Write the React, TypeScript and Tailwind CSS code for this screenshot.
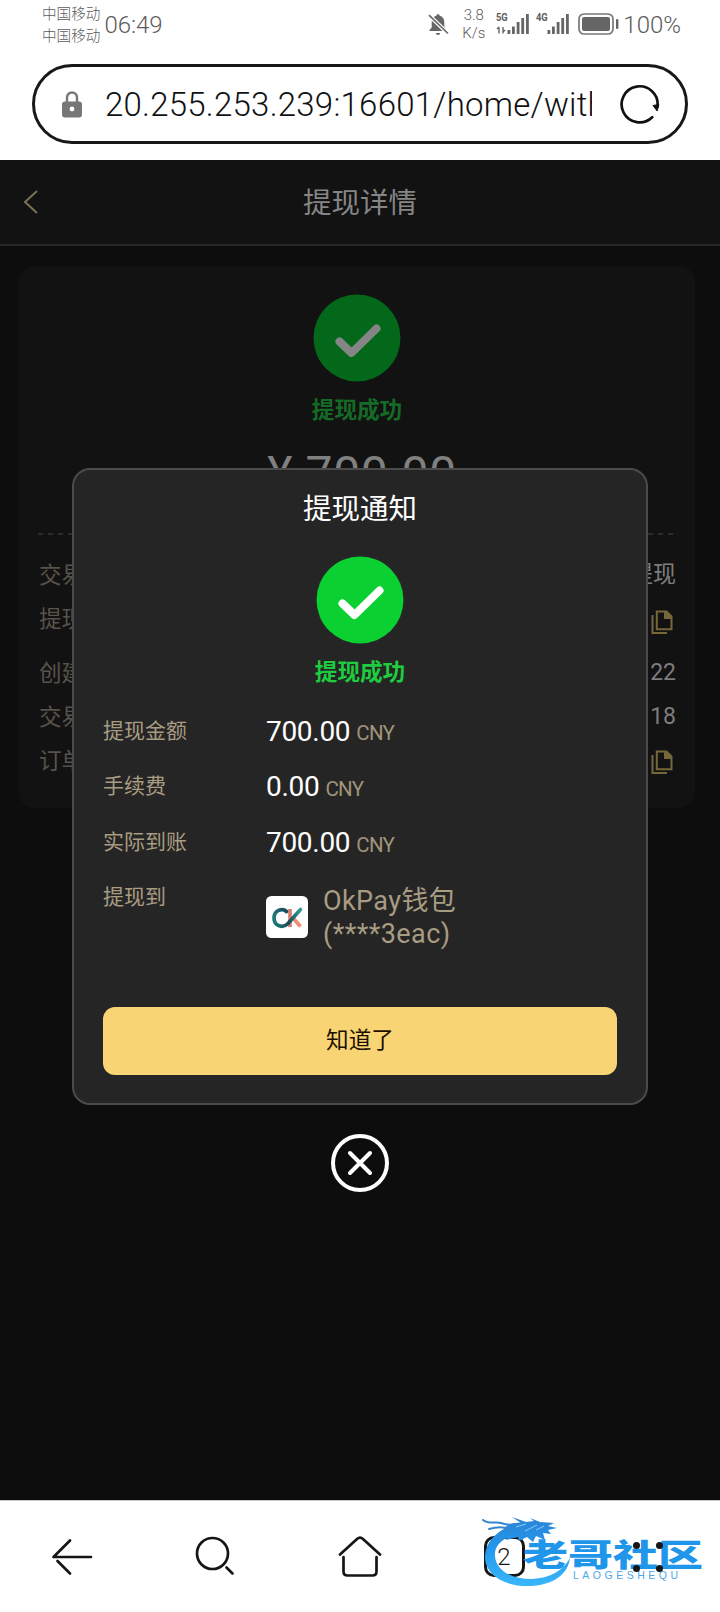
import { clsx } from 'clsx';

const details = [
  { label: '交易类型', value: '提现', row: 'h-11' },
  { label: '提现方式', copy: true, row: 'h-[44px] mb-[10px]' },
  { label: '创建时间', value: '22', row: 'h-11' },
  { label: '交易时间', value: '18', row: 'h-11' },
  { label: '订单号', copy: true, row: 'h-11 [&>svg]:mt-0.5' },
];

const amounts = [
  { label: '提现金额', value: '700.00' },
  { label: '手续费', value: '0.00' },
  { label: '实际到账', value: '700.00' },
];

function Signal({ label, data }: { label: string; data?: boolean }) {
  return (
    <div className="relative w-[34px] h-[22px]">
      <span className="absolute left-0 -top-px text-[11px] leading-[11px] font-bold font-['Roboto',sans-serif] scale-x-[0.85] origin-left">
        {label}
      </span>
      <svg className="absolute inset-0" width="34" height="22" viewBox="0 0 34 22" fill="#666">
        {data && <path d="M3 14v6.500M1 16l2-2M7 14v6.500M7 19l2-2" stroke="#666" strokeWidth="1.400" fill="none" />}
        <rect x="11.500" y="17" width="2.800" height="4" />
        <rect x="16" y="13.500" width="2.800" height="7.500" />
        <rect x="20.700" y="9" width="2.800" height="12" />
        <rect x="25.300" y="5" width="2.800" height="16" />
        <rect x="30" y="1" width="2.800" height="20" />
      </svg>
    </div>
  );
}

function StatusBar() {
  return (
    <div className="flex items-center h-12 pl-[42px] text-[#5c5c5c]">
      <div className="text-[14.6px] leading-[21.5px] font-light -mt-px">
        <div>中国移动</div>
        <div>中国移动</div>
      </div>
      <span className="ml-1 pt-px text-[24px] font-['Roboto',sans-serif] font-light w-[64px]">06:49</span>
      <div className="ml-auto mr-[39px] flex items-center">
        <svg className="mr-3" width="21" height="23" viewBox="0 0 21 23" fill="#666">
          <path d="M10 1.200c1.200 0 1.600.6 1.600 1.500 3 .8 4.700 3 4.700 6.300v4.400L18.500 17v1H1.500v-1l2.200-2.600V9c0-3.300 1.700-5.500 4.700-6.300 0-.9.400-1.500 1.600-1.500zM7.800 20h4.400c-.2 1.300-1 2-2.200 2s-2-.7-2.200-2z" />
          <path d="M1 2.200 20 20.500" stroke="#fff" strokeWidth="4" />
          <path d="M1 2.200 20 20.500" stroke="#666" strokeWidth="1.600" />
        </svg>
        <div className="w-[25px] text-center text-[15px] leading-[18px] font-['Roboto',sans-serif] font-light mr-[10px]">
          <div>3.8</div>
          <div>K/s</div>
        </div>
        <Signal label="5G" data />
        <div className="w-[6px]" />
        <Signal label="4G" />
        <svg className="ml-2 mr-1" width="41" height="22" viewBox="0 0 41 22" fill="none">
          <rect x="1" y="1" width="34" height="20" rx="5" stroke="#777" strokeWidth="1.700" />
          <rect x="4" y="4" width="28" height="14" rx="2" fill="#666" />
          <rect x="38" y="6" width="2.400" height="10" rx="1" fill="#666" />
        </svg>
        <span className="pt-px text-[24px] font-['Roboto',sans-serif] font-light">100%</span>
      </div>
    </div>
  );
}

function AddressBar() {
  return (
    <div className="mx-8 mt-4 h-20 rounded-full border-[3px] border-[#181818] flex items-center pl-[27px] pr-[24px]">
      <svg className="shrink-0" width="20" height="27" viewBox="0 0 20 27" fill="none">
        <path d="M5 12V6.500a5 5 0 0 1 10 0V12" stroke="#777" strokeWidth="2.400" />
        <rect y="10.500" width="20" height="16" rx="3" fill="#777" />
        <circle cx="10" cy="18" r="2.400" fill="#fff" />
      </svg>
      <div className="ml-[23px] w-[487px] pt-0.5 overflow-hidden whitespace-nowrap text-[33px] leading-[44px] font-['Roboto',sans-serif] font-light tracking-[0.240px] text-[#111]">
        20.255.253.239:16601/home/with
      </div>
      <svg className="ml-auto shrink-0" width="42" height="42" viewBox="0 0 42 42" fill="none">
        <path d="M33.200 34.200A18 18 0 1 1 38.500 23.500" stroke="#111" strokeWidth="2.700" strokeLinecap="round" />
        <path d="M34 22.500l5.800-1-1.600 6.500z" fill="#111" stroke="#111" />
      </svg>
    </div>
  );
}

function CheckBadge({ dim }: { dim?: boolean }) {
  return (
    <svg width="88" height="88" viewBox="0 0 88 88" fill="none">
      <circle cx="44" cy="44" r="43.500" fill={dim ? '#036819' : '#0bd031'} />
      <path
        d="M26.500 47.500 38.500 59 63.500 34.500"
        stroke={dim ? '#858585' : '#fff'}
        strokeWidth="8"
        strokeLinecap="round"
        strokeLinejoin="round"
      />
    </svg>
  );
}

function CopyIcon() {
  return (
    <svg className="mr-[3px] mt-1.5" width="22" height="24" viewBox="0 0 22 24" fill="none" stroke="#75673a" strokeWidth="2">
      <path d="M5.800 1.500h9.700l5 5v12.700H5.800z" />
      <path d="M13 1v8h8V6.500L15.500 1z" fill="#75673a" stroke="none" />
      <path d="M1.500 5v18H16" />
    </svg>
  );
}

function DetailPage() {
  return (
    <div className="h-[1340px] bg-[#0d0d0d]">
      <div className="h-[86px] border-b-2 border-[#272727] bg-[#121212] flex items-center justify-between px-[23px]">
        <svg width="16" height="24" viewBox="0 0 16 24" fill="none" stroke="#7b7252" strokeWidth="2">
          <path d="M14 1 2 12l12 11" />
        </svg>
        <h1 className="pb-0.5 text-[28.5px] text-[#858585]">提现详情</h1>
        <div className="w-4" />
      </div>

      <div className="ml-[19px] mr-[25px] mt-5 h-[542px] rounded-2xl bg-[#121212] pl-[19px] pr-[19px] pt-[28px]">
        <div className="flex flex-col items-center">
          <CheckBadge dim />
          <div className="mt-[11px] text-[22.6px] leading-8 font-bold text-[#146b25]">提现成功</div>
          <div className="mt-[21px] pl-2.5 text-[48px] leading-[56px] tracking-[0.6px] font-['Roboto','Noto_Sans_CJK_SC',sans-serif] text-[#808080]">
            ¥ 700.00
          </div>
        </div>
        <svg className="mt-[31px] block" width="638" height="2">
          <path d="M0 1h638" stroke="#2b2b2b" strokeWidth="2" strokeDasharray="5 5" />
        </svg>
        <div className="mt-[18px]">
          {details.map((d, i) => (
            <div key={i} className={clsx('flex items-center justify-between', d.row)}>
              <span className="pb-0.5 pl-px text-[22.5px] text-[#58534a]">{d.label}</span>
              {d.copy ? (
                <CopyIcon />
              ) : (
                <span className="pt-px text-[23px] font-['Roboto','Noto_Sans_CJK_SC',sans-serif] text-[#7d7d7d]">{d.value}</span>
              )}
            </div>
          ))}
        </div>
      </div>
    </div>
  );
}

function WalletLogo() {
  return (
    <svg width="42" height="42" viewBox="0 0 42 42" fill="none">
      <defs>
        <linearGradient id="teal" x1="6" y1="20" x2="36" y2="14" gradientUnits="userSpaceOnUse">
          <stop stopColor="#1f7d7a" />
          <stop offset=".5" stopColor="#16495a" />
          <stop offset="1" stopColor="#3aa79c" />
        </linearGradient>
      </defs>
      <rect width="42" height="42" rx="5.500" fill="#fff" />
      <path d="M24 13v18" stroke="#d87b6c" strokeWidth="3.600" />
      <path d="M27 22l7.500 8.500" stroke="#ee8e75" strokeWidth="3.800" />
      <path
        d="M20.500 15.500C16 11.500 8 14.500 8 22c0 8.500 9 10.500 14 5.500L34.500 13.500"
        stroke="url(#teal)"
        strokeWidth="3.700"
        strokeLinecap="round"
      />
    </svg>
  );
}

function NoticeModal() {
  return (
    <div className="absolute left-[72px] top-[468px] w-[576px] flex flex-col items-center">
      <div className="w-full h-[637px] rounded-[18px] border-2 border-[#4b4b4b] bg-[#252525] px-[29px]">
        <h2 className="mt-[17px] text-center text-[28.5px] leading-10 text-white">提现通知</h2>
        <div className="mt-[29px] flex flex-col items-center">
          <CheckBadge />
          <div className="mt-[11px] text-[22.6px] leading-8 font-bold text-[#1fcb3f]">提现成功</div>
        </div>
        <div className="mt-4">
          {amounts.map((a) => (
            <div key={a.label} className="flex items-center h-[55.600px]">
              <span className="w-[163px] pb-[3px] text-[21px] text-[#a89c82]">{a.label}</span>
              <span className="pt-0.5 font-['Roboto',sans-serif] text-[28px] tracking-[-0.3px] text-white">{a.value}</span>
              <span className="ml-1.5 pt-1.5 font-['Roboto',sans-serif] text-[20.5px] tracking-[-0.7px] text-[#a09479]">CNY</span>
            </div>
          ))}
          <div className="flex">
            <span className="w-[163px] pt-[9px] text-[21px] leading-8 text-[#a89c82]">提现到</span>
            <div className="flex items-center gap-[15px] pt-[14px]">
              <WalletLogo />
              <div className="translate-y-px text-[27px] leading-[33px] tracking-[0.4px] text-[#a89c82] font-['Roboto','Noto_Sans_CJK_SC',sans-serif]">
                <div>OkPay钱包</div>
                <div>(****3eac)</div>
              </div>
            </div>
          </div>
        </div>
        <button className="mt-[57px] pb-[3px] w-full h-[68px] rounded-xl bg-[#f8d475] text-[22.6px] text-[#1c1000]">知道了</button>
      </div>
      <svg className="mt-[29px]" width="58" height="58" viewBox="0 0 58 58" fill="none" stroke="#fff" strokeLinecap="round">
        <circle cx="29" cy="29" r="27" strokeWidth="4" />
        <path d="M19 19l20 20M39 19 19 39" strokeWidth="4" />
      </svg>
    </div>
  );
}

function Watermark() {
  return (
    <div className="absolute left-[480px] top-[1510px] w-[225px] h-[80px]">
      <svg className="absolute inset-0" width="225" height="80" viewBox="0 0 225 80" fill="none">
        <defs>
          <linearGradient id="dragon" x1="0" y1="0" x2="0" y2="80" gradientUnits="userSpaceOnUse">
            <stop stopColor="#2a7fd0" />
            <stop offset=".5" stopColor="#2499ee" />
            <stop offset="1" stopColor="#3cbafa" />
          </linearGradient>
        </defs>
        <path
          d="M42 12C20 17 4 31 5 49c2 18 22 28 46 27 21-1 37-11 39-28-7 13-20 20-38 21-20 0-36-8-37-23-1-13 12-21 33-24z"
          fill="url(#dragon)"
        />
        <path
          d="M24 18c6-5 12-6 17-5l-9-6 14 5 8-1-4-3 10 4 14 1-6 3 9 2-9 2 3 4-8-1 2 7-9-4-3 6-6-5-8 4-1-4-12 3 2-6z"
          fill="url(#dragon)"
        />
        <path d="M3 10c6 5 13 1 18 3s10 2 15 1M9 19c7-2 13-3 20 0" stroke="#3487cf" strokeWidth="2" strokeLinecap="round" />
        <path d="M36 17l10-3M45 21l12-6M56 20l8-4" stroke="#8cc8f4" strokeWidth="1" />
      </svg>
      <div className="absolute left-[43px] top-[24px] w-[184px] h-[38px] text-[45px] leading-[38px] font-black whitespace-nowrap scale-y-[0.690] text-[#1f96ea]">
        老哥社区
      </div>
      <div className="absolute left-[93px] top-[60px] text-[10.5px] leading-[10px] tracking-[3.500px] font-['Liberation_Sans',sans-serif] text-[#4aa9e8] whitespace-nowrap">
        LAOGESHEQU
      </div>
    </div>
  );
}

function NavBar() {
  return (
    <div className="h-28 border-t border-[#c9c9c9] bg-white grid grid-cols-5 items-center justify-items-center text-[#161616]">
      <svg width="44" height="44" viewBox="0 0 44 44" fill="none" stroke="currentColor" strokeWidth="2.700" strokeLinecap="round">
        <path d="M3.500 22H41M3.500 22 20 5.500M7.500 26l12.500 12.500" />
      </svg>
      <svg width="44" height="44" viewBox="0 0 44 44" fill="none" stroke="currentColor" strokeWidth="2.700" strokeLinecap="round">
        <circle cx="18.500" cy="18.500" r="15.500" />
        <path d="m32.500 32.500 6 6" />
      </svg>
      <svg width="44" height="44" viewBox="0 0 44 44" fill="none" stroke="currentColor" strokeWidth="2.700" strokeLinecap="round">
        <path d="M2 19.500 19 4q3-2.600 6 0l17 15.500" />
        <path d="M5.500 22v14.500q0 4 4 4h25q4 0 4-4V22" />
      </svg>
      <div className="size-[41px] rounded-[10px] border-[3px] border-current flex items-center justify-center text-[24px] leading-none font-['Roboto',sans-serif] font-light">
        2
      </div>
      <svg className="relative z-10" width="30" height="30" viewBox="0 0 30 30" fill="currentColor">
        <circle cx="3.500" cy="3.500" r="3.500" />
        <circle cx="26.500" cy="3.500" r="3.500" />
        <circle cx="3.500" cy="26.500" r="3.500" />
        <circle cx="26.500" cy="26.500" r="3.500" />
      </svg>
    </div>
  );
}

export default function App() {
  return (
    <div className="relative w-[720px] h-[1612px] overflow-hidden bg-white font-['Noto_Sans_CJK_SC',sans-serif]">
      <div className="h-40">
        <StatusBar />
        <AddressBar />
      </div>
      <DetailPage />
      <NavBar />
      <NoticeModal />
      <Watermark />
    </div>
  );
}
